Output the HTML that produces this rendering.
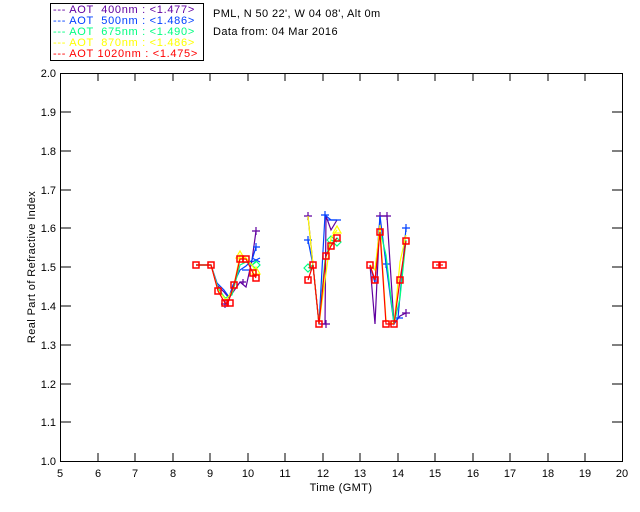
<!DOCTYPE html>
<html><head><style>
body{margin:0;background:#fff;width:640px;height:512px;overflow:hidden}
svg{display:block}
text{font-family:"Liberation Sans",sans-serif;font-size:11px}
</style></head><body>
<svg width="640" height="512" xmlns="http://www.w3.org/2000/svg">
<rect x="50.5" y="3.5" width="153" height="57" fill="none" stroke="#000"/>
<g font-size="11" letter-spacing="0.7">
<text x="53" y="13" fill="#6000a0">--- AOT &#160;400nm : &lt;1.477&gt;</text>
<text x="53" y="24" fill="#0040ff">--- AOT &#160;500nm : &lt;1.486&gt;</text>
<text x="53" y="35" fill="#00ff80">--- AOT &#160;675nm : &lt;1.490&gt;</text>
<text x="53" y="46" fill="#ffff00">--- AOT &#160;870nm : &lt;1.486&gt;</text>
<text x="53" y="57" fill="#ff0000">--- AOT 1020nm : &lt;1.475&gt;</text>
</g>
<text x="213" y="17" letter-spacing="0.4">PML, N 50 22', W 04 08', Alt 0m</text>
<text x="213" y="35" letter-spacing="0.4">Data from: 04 Mar 2016</text>
<rect x="60.5" y="73.5" width="562" height="388" fill="none" stroke="#000"/>
<g stroke="#000">
<path d="M98 73v8M135 73v8M173 73v8M210 73v8M248 73v8M285 73v8M323 73v8M360 73v8M398 73v8M435 73v8M473 73v8M510 73v8M548 73v8M585 73v8
M98 461v-8M135 461v-8M173 461v-8M210 461v-8M248 461v-8M285 461v-8M323 461v-8M360 461v-8M398 461v-8M435 461v-8M473 461v-8M510 461v-8M548 461v-8M585 461v-8
M60 112h11M60 151h11M60 190h11M60 228h11M60 267h11M60 306h11M60 345h11M60 384h11M60 422h11
M623 112h-11M623 151h-11M623 190h-11M623 228h-11M623 267h-11M623 306h-11M623 345h-11M623 384h-11M623 422h-11"/>
</g>
<g text-anchor="end">
<text x="56" y="77">2.0</text><text x="56" y="116">1.9</text><text x="56" y="155">1.8</text><text x="56" y="194">1.7</text><text x="56" y="232">1.6</text><text x="56" y="271">1.5</text><text x="56" y="310">1.4</text><text x="56" y="349">1.3</text><text x="56" y="388">1.2</text><text x="56" y="426">1.1</text><text x="56" y="465">1.0</text>
</g>
<g text-anchor="middle">
<text x="60" y="477">5</text><text x="98" y="477">6</text><text x="135" y="477">7</text><text x="173" y="477">8</text><text x="210" y="477">9</text><text x="248" y="477">10</text><text x="285" y="477">11</text><text x="323" y="477">12</text><text x="360" y="477">13</text><text x="398" y="477">14</text><text x="435" y="477">15</text><text x="473" y="477">16</text><text x="510" y="477">17</text><text x="548" y="477">18</text><text x="585" y="477">19</text><text x="622" y="477">20</text>
<text x="341" y="491" letter-spacing="0.4">Time (GMT)</text>
</g>
<text transform="translate(35,267) rotate(-90)" text-anchor="middle" letter-spacing="0.4">Real Part of Refractive Index</text>
<g fill="none" stroke-width="1.2">
<g stroke="#6000a0">
<polyline points="196,265 211,265 217,285 224,292 229,298 240,282 246,287 252,260 256,231"/>
<polyline points="308,216 313,265 319,324 325,324 326,216 331,230 337,220"/>
<polyline points="370,265 375,324 380,216 387,216 394,324 400,316 406,313"/>
<path d="M252 231h8M256 227v8M304 216h8M308 212v8M322 324h8M326 320v8M376 216h8M380 212v8M383 216h8M387 212v8M402 313h8M406 309v8M240 282h6M243 279v6M221 304h8M225 300v8"/>
</g>
<g stroke="#0040ff">
<polyline points="196,265 211,265 217,283 224,290 229,297 233,285 240,270 246,266 252,260 256,247"/>
<polyline points="308,240 313,265 319,324 325,215 331,220 337,220"/>
<polyline points="370,265 375,283 380,216 386,264 394,324 398,318 406,228"/>
<path d="M253 247h7M256 243v8M304 240h8M308 236v8M321 215h8M325 211v8M328 220h7M334 220h7M402 228h8M406 224v8M396 318h7M382 264h8M386 260v8M252 262l8 -4M252 258l8 4M242 270h7"/>
</g>
<g stroke="#00ff80">
<polyline points="196,265 211,265 218,288 225,298 232,295 240,265 246,262 252,265 256,262"/>
<polyline points="308,268 313,265 319,324 325,260 331,240 337,242"/>
<polyline points="370,265 375,270 380,230 386,255 394,324 400,298 406,240"/>
<path d="M304 268l4-4 4 4-4 4zM327 240l4-4 4 4-4 4zM333 242l4-4 4 4-4 4zM252 265l4-4 4 4-4 4z"/>
</g>
<g stroke="#ffff00">
<polyline points="196,265 211,265 218,290 226,300 233,290 240,255 246,258 252,265 256,272"/>
<polyline points="308,216 313,265 319,324 325,280 331,238 337,230"/>
<polyline points="370,265 375,270 380,225 386,320 394,324 400,262 406,235"/>
<path d="M236 258l4-7 4 7zM333 233l4-7 4 7zM252 274l4-7 4 7z"/>
</g>
<g stroke="#ff0000">
<polyline points="196,265 211,265 218,291 225,303 228,303 234,285 240,259 246,259 253,273 256,278"/>
<polyline points="308,280 313,265 319,324 326,256 331,246 337,238"/>
<polyline points="370,265 375,280 380,232 386,324 394,324 400,280 406,241"/>
<polyline points="436,265 443,265"/>
<g stroke-width="1.5">
<rect x="193" y="262" width="6" height="6"/><rect x="208" y="262" width="6" height="6"/><rect x="215" y="288" width="6" height="6"/><rect x="222" y="300" width="6" height="6"/><rect x="227" y="300" width="6" height="6"/><rect x="231" y="282" width="6" height="6"/><rect x="237" y="256" width="6" height="6"/><rect x="243" y="256" width="6" height="6"/><rect x="250" y="270" width="6" height="6"/><rect x="253" y="275" width="6" height="6"/>
<rect x="305" y="277" width="6" height="6"/><rect x="310" y="262" width="6" height="6"/><rect x="316" y="321" width="6" height="6"/><rect x="323" y="253" width="6" height="6"/><rect x="328" y="243" width="6" height="6"/><rect x="334" y="235" width="6" height="6"/>
<rect x="367" y="262" width="6" height="6"/><rect x="372" y="277" width="6" height="6"/><rect x="377" y="229" width="6" height="6"/><rect x="383" y="321" width="6" height="6"/><rect x="391" y="321" width="6" height="6"/><rect x="397" y="277" width="6" height="6"/><rect x="403" y="238" width="6" height="6"/>
<rect x="433" y="262" width="6" height="6"/><rect x="440" y="262" width="6" height="6"/>
</g>
</g>
</g>
</svg>
</body></html>
